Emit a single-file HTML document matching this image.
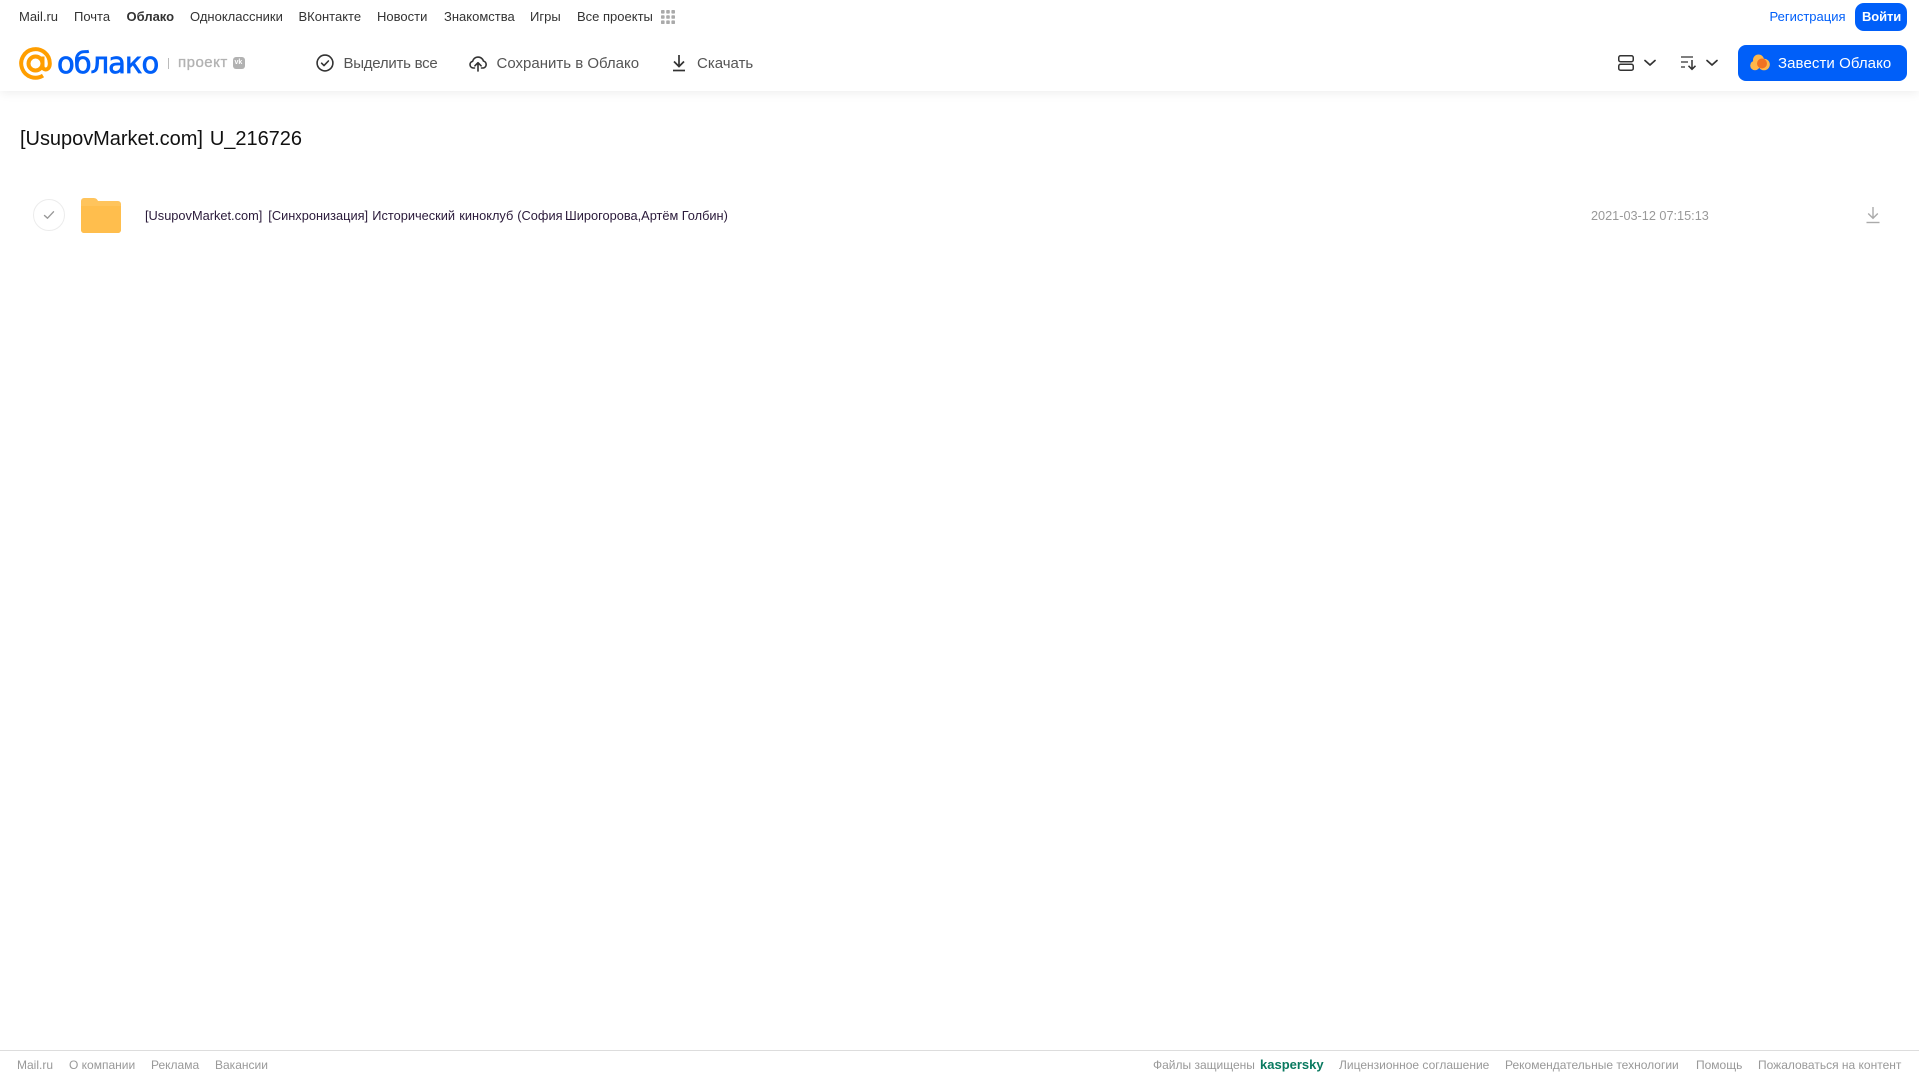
<!DOCTYPE html>
<html lang="ru"><head><meta charset="utf-8"><title>Облако</title>
<style>
html,body{margin:0;padding:0;background:#fff;width:1919px;height:1079px;overflow:hidden}
body{font-family:"Liberation Sans",Arial,sans-serif;position:relative}
.t{position:absolute;white-space:nowrap;line-height:20px}
.n{top:7px;font-size:13px;color:#333}
.b{top:53.5px;font-size:15px;color:#555}
.f{top:1055px;font-size:12px;color:#999}
.r{top:206px;font-size:12.8px;color:#2a1a3a}
svg{position:absolute;display:block}
#hd{position:absolute;left:0;top:0;width:1919px;height:91px;background:#fff;box-shadow:0 2px 10px rgba(0,0,0,.07)}
#ft{position:absolute;left:0;top:1050px;width:1919px;height:29px;background:#fff;border-top:1px solid #ddd;box-sizing:border-box}
</style></head><body>
<div id="hd"></div>
<span class="t n" style="left:19px">Mail.ru</span>
<span class="t n" style="left:74px">Почта</span>
<span class="t n" style="left:126.5px;font-weight:700">Облако</span>
<span class="t n" style="left:190px">Одноклассники</span>
<span class="t n" style="left:298.5px">ВКонтакте</span>
<span class="t n" style="left:377px">Новости</span>
<span class="t n" style="left:444px">Знакомства</span>
<span class="t n" style="left:530px">Игры</span>
<span class="t n" style="left:577px">Все проекты</span>
<svg style="left:661px;top:10px" width="14" height="14" viewBox="0 0 14 14" fill="#aaa"><rect width="3.6" height="3.6" rx=".8"/><rect x="5.2" width="3.6" height="3.6" rx=".8"/><rect x="10.4" width="3.6" height="3.6" rx=".8"/><rect y="5.2" width="3.6" height="3.6" rx=".8"/><rect x="5.2" y="5.2" width="3.6" height="3.6" rx=".8"/><rect x="10.4" y="5.2" width="3.6" height="3.6" rx=".8"/><rect y="10.4" width="3.6" height="3.6" rx=".8"/><rect x="5.2" y="10.4" width="3.6" height="3.6" rx=".8"/><rect x="10.4" y="10.4" width="3.6" height="3.6" rx=".8"/></svg>
<span class="t n" style="left:1769.5px;color:#005ff9">Регистрация</span>
<div style="position:absolute;left:1855px;top:3px;width:52px;height:28px;border-radius:9px;background:#005ff9"></div>
<span class="t n" style="left:1862px;color:#fff;font-weight:700;letter-spacing:-.1px">Войти</span>

<svg style="left:19px;top:47px" width="33" height="33" viewBox="0 0 33 33" fill="none" stroke="#ff9e00" stroke-width="4"><circle cx="16.5" cy="16.5" r="7"/><path d="M23.5 9.5v9.5c0 5 7.3 5 7.3-2.500A14.3 14.3 0 1 0 24 28.6"/></svg>
<span class="t" style="left:57px;top:47.5px;line-height:30px;font-size:29px;font-family:'DejaVu Sans',sans-serif;font-weight:400;color:#005ff9;-webkit-text-stroke:.7px #005ff9;letter-spacing:-1px">облако</span>
<div style="position:absolute;left:168px;top:58px;width:1px;height:11px;background:#bbb"></div>
<span class="t" style="left:178px;top:53px;font-size:15px;color:#b2b2b2;-webkit-text-stroke:.35px #b2b2b2;letter-spacing:.5px">проект</span>
<div style="position:absolute;left:233px;top:57px;width:12px;height:12px;border-radius:3px;background:#b2b2b2"></div>
<span class="t" style="left:234.5px;top:53px;font-size:7px;font-weight:700;color:#fff">vk</span>

<svg style="left:316px;top:54px" width="18" height="18" viewBox="0 0 18 18" fill="none" stroke="#333" stroke-width="1.6"><circle cx="9" cy="9" r="7.9"/><path d="M5.6 9.2l2.4 2.4 4.4-4.6" stroke-linecap="round" stroke-linejoin="round"/></svg>
<span class="t b" style="left:343.5px;letter-spacing:-.25px">Выделить все</span>
<svg style="left:469px;top:54px" width="18" height="18" viewBox="0 0 18 18" fill="none" stroke="#333" stroke-width="1.6" stroke-linecap="round" stroke-linejoin="round"><path d="M5.5 14H4.3A3.4 3.4 0 0 1 3.6 7.3 5.6 5.6 0 0 1 14.4 7a3.6 3.6 0 0 1 0 7h-1.9"/><path d="M9 17V9M5.9 11.8 9 8.7l3.1 3.1"/></svg>
<span class="t b" style="left:496.5px">Сохранить в Облако</span>
<svg style="left:671px;top:54px" width="16" height="18" viewBox="0 0 16 18" fill="none" stroke="#333" stroke-width="1.7"><path d="M8 1v11M3 7.500 8 12.500l5-5"/><path d="M2 16.500h12"/></svg>
<span class="t b" style="left:697px">Скачать</span>

<svg style="left:1618px;top:55px" width="16" height="16" viewBox="0 0 16 16" fill="none" stroke="#333" stroke-width="1.5"><rect x=".75" y=".75" width="14.5" height="6" rx="1.8"/><rect x=".75" y="9.250" width="14.5" height="6" rx="1.8"/></svg>
<svg style="left:1643px;top:59px" width="14" height="8" viewBox="0 0 14 8" fill="none" stroke="#333" stroke-width="1.7" stroke-linecap="round" stroke-linejoin="round"><path d="M2 1.500l5 4.500 5-4.500"/></svg>
<svg style="left:1681px;top:55px" width="16" height="16" viewBox="0 0 16 16" fill="none" stroke="#333" stroke-width="1.3"><path d="M0 2h12M0 7h7M0 12h4"/><path d="M11 5v9M7.500 10.800 11 14.300l3.500-3.500" stroke-width="1.5"/></svg>
<svg style="left:1705px;top:59px" width="14" height="8" viewBox="0 0 14 8" fill="none" stroke="#333" stroke-width="1.7" stroke-linecap="round" stroke-linejoin="round"><path d="M2 1.500l5 4.500 5-4.500"/></svg>

<div style="position:absolute;left:1738px;top:45px;width:169px;height:36px;border-radius:8px;background:#005ff9"></div>
<svg style="left:1750px;top:54px" width="20" height="17" viewBox="0 0 20 17"><g fill="#ffb74a"><circle cx="5" cy="11.500" r="4.800"/><circle cx="8.500" cy="6" r="5.500"/><circle cx="14" cy="10.500" r="5.800"/></g><circle cx="12" cy="9.500" r="5" fill="#f06a1e" opacity=".9"/></svg>
<span class="t" style="left:1778px;top:53.5px;font-size:15px;color:#fff;letter-spacing:.08px">Завести Облако</span>

<span class="t" style="left:20px;top:124.5px;line-height:28px;font-size:20px;color:#111;word-spacing:1.5px;letter-spacing:-.03px">[UsupovMarket.com] U_216726</span>

<div style="position:absolute;left:33px;top:199px;width:32px;height:32px;box-sizing:border-box;border:1px solid #ececec;border-radius:50%"></div>
<svg style="left:43px;top:210px" width="12" height="10" viewBox="0 0 12 10" fill="none" stroke="#999" stroke-width="1.4" stroke-linecap="round" stroke-linejoin="round"><path d="M1.500 5.500 4.500 8.200 10.500 1.800"/></svg>
<svg style="left:81px;top:198px" width="40" height="35" viewBox="0 0 40 35"><path d="M3 0h9c3 0 4 1 5 3h20a3 3 0 0 1 3 3v26a3 3 0 0 1-3 3H3a3 3 0 0 1-3-3V3a3 3 0 0 1 3-3z" fill="#ffc45c"/><path d="M0 8h40v24a3 3 0 0 1-3 3H3a3 3 0 0 1-3-3z" fill="#ffbe4d"/></svg>
<span class="t r" style="left:145px">[UsupovMarket.com]</span>
<span class="t r" style="left:268.3px">[Синхронизация]</span>
<span class="t r" style="left:372.3px">Исторический</span>
<span class="t r" style="left:459.3px">киноклуб</span>
<span class="t r" style="left:517.3px">(София</span>
<span class="t r" style="left:565px">Широгорова,Артём</span>
<span class="t r" style="left:681.700px">Голбин)</span>
<span class="t" style="left:1591px;top:206px;font-size:12.7px;color:#999">2021-03-12 07:15:13</span>
<svg style="left:1866px;top:206px" width="14" height="18" viewBox="0 0 14 18" fill="none" stroke="#aaa" stroke-width="1.4"><path d="M7 1v11M2.200 7.500 7 12.300l4.800-4.800"/><path d="M.5 16.500h13"/></svg>

<div id="ft"></div>
<span class="t f" style="left:17px">Mail.ru</span>
<span class="t f" style="left:69px">О компании</span>
<span class="t f" style="left:151px">Реклама</span>
<span class="t f" style="left:215px">Вакансии</span>
<span class="t f" style="left:1153px">Файлы защищены</span>
<span class="t f" style="left:1260px;color:#0a7a60;font-weight:700;font-size:13px">kaspersky</span>
<span class="t f" style="left:1339px">Лицензионное соглашение</span>
<span class="t f" style="left:1505px">Рекомендательные технологии</span>
<span class="t f" style="left:1696px">Помощь</span>
<span class="t f" style="left:1758px">Пожаловаться на контент</span>
</body></html>
